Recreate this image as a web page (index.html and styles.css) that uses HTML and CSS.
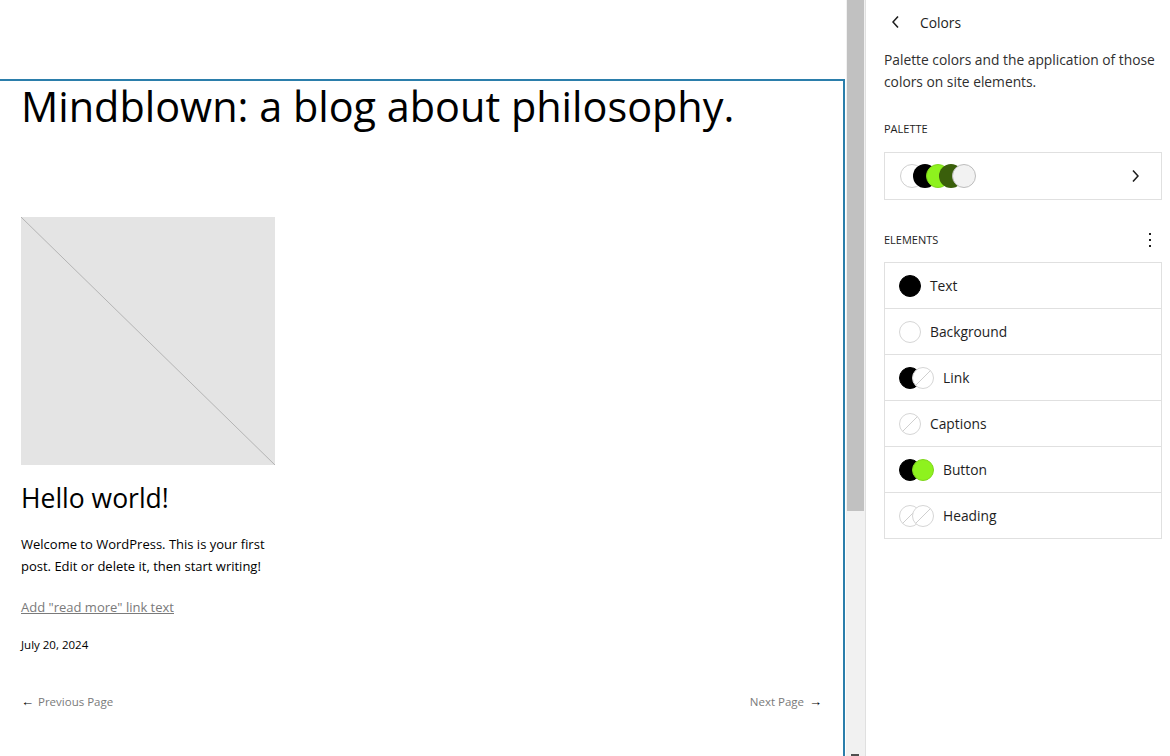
FILE: index.html
```html
<!DOCTYPE html>
<html lang="en">
<head>
  <meta charset="UTF-8">
  <title>Site Editor - Colors</title>
  <link rel="stylesheet" href="styles.css">
</head>
<body>

  <div class="editor">

    <!-- Canvas -->
    <div class="canvas">
      <div class="canvas-top"></div>
      <div class="canvas-frame">
        <h1 class="site-title">Mindblown: a blog about philosophy.</h1>

        <div class="post">
          <div class="placeholder">
            <svg viewBox="0 0 100 100" preserveAspectRatio="none">
              <line x1="0" y1="0" x2="100" y2="100" stroke="#b4b4b4" stroke-width="1" vector-effect="non-scaling-stroke"/>
            </svg>
          </div>
          <h2 class="post-title">Hello world!</h2>
          <p class="post-excerpt">Welcome to WordPress. This is your first post. Edit or delete it, then start writing!</p>
          <a class="read-more" href="#">Add "read more" link text</a>
          <div class="post-date">July 20, 2024</div>
        </div>

        <div class="pagination">
          <span><span class="arrow arrow-prev">&larr;</span>Previous Page</span>
          <span>Next Page<span class="arrow arrow-next">&rarr;</span></span>
        </div>
      </div>
    </div>

    <div class="scrollbar">
      <div class="scroll-thumb"></div>
      <div class="scroll-arrow"></div>
    </div>

    <!-- Sidebar -->
    <aside class="sidebar">
      <div class="panel-header">
        <svg class="icon" viewBox="0 0 24 24" width="24" height="24">
          <path d="M14.6 7l-1.2-1L8 12l5.4 6 1.2-1-4.6-5z" fill="#1e1e1e"/>
        </svg>
        <span class="panel-title">Colors</span>
      </div>
      <p class="panel-desc">Palette colors and the application of those colors on site elements.</p>

      <div class="section-label">Palette</div>
      <div class="palette-box">
        <div class="swatches">
          <span class="dot dot-white"></span>
          <span class="dot dot-black"></span>
          <span class="dot dot-lime"></span>
          <span class="dot dot-forest"></span>
          <span class="dot dot-light"></span>
        </div>
        <svg class="icon" viewBox="0 0 24 24" width="24" height="24">
          <path d="M10.6 6L9.4 7l4.6 5-4.6 5 1.2 1 5.4-6z" fill="#1e1e1e"/>
        </svg>
      </div>

      <div class="section-row">
        <div class="section-label">Elements</div>
        <svg class="icon" viewBox="0 0 24 24" width="24" height="24">
          <path d="M13 19h-2v-2h2v2zm0-6h-2v-2h2v2zm0-6h-2V5h2v2z" fill="#1e1e1e"/>
        </svg>
      </div>

      <ul class="element-list">
        <li>
          <span class="indicators"><span class="ind ind-black"></span></span>
          Text
        </li>
        <li>
          <span class="indicators"><span class="ind ind-white"></span></span>
          Background
        </li>
        <li>
          <span class="indicators"><span class="ind ind-black"></span><span class="ind ind-none"></span></span>
          Link
        </li>
        <li>
          <span class="indicators"><span class="ind ind-none"></span></span>
          Captions
        </li>
        <li>
          <span class="indicators"><span class="ind ind-black"></span><span class="ind ind-lime"></span></span>
          Button
        </li>
        <li>
          <span class="indicators"><span class="ind ind-none"></span><span class="ind ind-none"></span></span>
          Heading
        </li>
      </ul>
    </aside>

  </div>

</body>
</html>
```

FILE: styles.css
```css
* {
  box-sizing: border-box;
}

html, body {
  margin: 0;
  padding: 0;
  height: 100%;
  overflow: hidden;
}

body {
  font-family: "Open Sans", "Noto Sans", sans-serif;
  color: #1e1e1e;
  background: #fff;
}

.editor {
  display: flex;
  height: 756px;
}

/* Canvas */
.canvas {
  width: 846px;
  flex: none;
  display: flex;
  flex-direction: column;
  overflow: hidden;
}

.canvas-top {
  height: 79px;
  flex: none;
}

.canvas-frame {
  flex: 1;
  width: 845px;
  border-top: 2px solid #2b7eab;
  border-right: 2px solid #2b7eab;
  padding: 0 21px 0 21px;
  color: #000;
}

.site-title {
  font-weight: 400;
  font-size: 41.4px;
  line-height: 48px;
  margin: 1px 0 0;
}

.post {
  width: 254px;
  margin-top: 87px;
}

.placeholder {
  width: 254px;
  height: 248px;
  background: #e4e4e4;
}

.placeholder svg {
  display: block;
  width: 100%;
  height: 100%;
}

.post-title {
  font-weight: 400;
  font-size: 26.5px;
  line-height: 34px;
  margin: 16px 0 0;
}

.post-excerpt {
  font-size: 13px;
  line-height: 22px;
  margin: 18px 0 0;
}

.read-more {
  display: block;
  font-size: 13px;
  line-height: 22px;
  margin-top: 19px;
  color: #7a7a7a;
  white-space: nowrap;
}

.post-date {
  font-size: 11.5px;
  line-height: 18px;
  margin-top: 18px;
}

.pagination {
  display: flex;
  justify-content: space-between;
  margin-top: 38px;
  font-size: 11.5px;
  line-height: 18px;
  color: #7a7a7a;
}

.pagination .arrow {
  color: #000;
  font-size: 13px;
}

.arrow-prev {
  margin-right: 4px;
}

.arrow-next {
  margin-left: 5px;
}

/* Scrollbar */
.scrollbar {
  width: 19px;
  flex: none;
  background: #f1f1f1;
  position: relative;
}

.scroll-thumb {
  margin: 0 1px;
  height: 511px;
  background: #c1c1c1;
}

.scroll-arrow {
  position: absolute;
  left: 5px;
  bottom: 0;
  width: 8px;
  height: 2px;
  background: #505050;
}

/* Sidebar */
.sidebar {
  flex: 1;
  border-left: 1px solid #e0e0e0;
  padding: 0 8px 0 18px;
  font-size: 13px;
}

.icon {
  display: block;
  flex: none;
}

.panel-header {
  height: 44px;
  display: flex;
  align-items: center;
  gap: 12px;
}

.panel-title {
  font-size: 13.8px;
  font-weight: 500;
}

.panel-desc {
  margin: 5px 0 0;
  font-size: 13.8px;
  line-height: 22px;
  color: #2f2f2f;
}

.section-label {
  margin-top: 28px;
  font-size: 11px;
  line-height: 16px;
  font-weight: 500;
  text-transform: uppercase;
}

.palette-box {
  margin-top: 15px;
  height: 48px;
  border: 1px solid #e0e0e0;
  display: flex;
  align-items: center;
  justify-content: space-between;
  padding: 0 14px 0 15px;
}

.swatches {
  display: flex;
}

.dot {
  width: 24px;
  height: 24px;
  border-radius: 50%;
  margin-left: -11px;
  border: 1px solid transparent;
}

.dot:first-child {
  margin-left: 0;
}

.dot-white  { background: #fff; border-color: #cfcfcf; }
.dot-black  { background: #000; }
.dot-lime   { background: #8ef21e; border-color: #7fd61c; }
.dot-forest { background: #3a5f0b; }
.dot-light  { background: #f2f2f2; border-color: #bdbdbd; }

.section-row {
  margin-top: 28px;
  height: 24px;
  display: flex;
  align-items: center;
  justify-content: space-between;
}

.section-row .section-label {
  margin-top: 0;
}

.element-list {
  list-style: none;
  margin: 10px 0 0;
  padding: 0;
  border: 1px solid #e0e0e0;
}

.element-list li {
  height: 46px;
  display: flex;
  align-items: center;
  padding: 0 14px;
  border-top: 1px solid #e0e0e0;
  font-size: 13.8px;
  color: #1e1e1e;
}

.element-list li:first-child {
  border-top: none;
  height: 45px;
}

.indicators {
  display: flex;
  margin-right: 9px;
}

.ind {
  width: 22px;
  height: 22px;
  border-radius: 50%;
  border: 1px solid #d6d6d6;
  background: #fff;
}

.ind + .ind {
  margin-left: -9px;
}

.ind-black { background: #000; border-color: #000; }
.ind-white { background: #fff; }
.ind-lime  { background: #8ef21e; border-color: #7fd61c; }

.ind-none {
  background: #fff linear-gradient(135deg, transparent 0 calc(50% - 0.6px), #cfcfcf calc(50% - 0.6px) calc(50% + 0.6px), transparent calc(50% + 0.6px));
}
```
